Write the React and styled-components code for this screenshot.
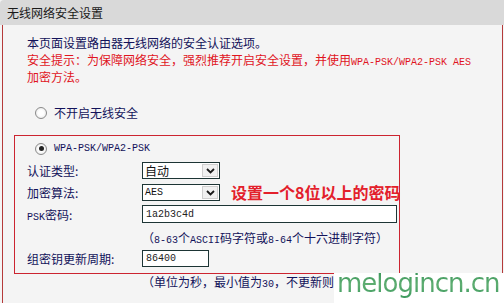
import React from "react";
import styled, { createGlobalStyle } from "styled-components";

const Global = createGlobalStyle`
  html, body { margin: 0; padding: 0; background: #f4f4f4; }
  body {
    font-family: "Noto Sans CJK SC", sans-serif;
    font-size: 12px;
    color: #12125a;
  }
`;

const Page = styled.div`
  position: relative;
  width: 504px;
  height: 303px;
  overflow: hidden;
  background: #f4f4f4;
  display: flex;
  flex-direction: column;
`;

const Header = styled.div`
  height: 25px;
  flex: none;
  background: #d9d9d9;
  border-top-left-radius: 4px;
  display: flex;
  align-items: center;
  padding-left: 7px;
  font-size: 12px;
  color: #1a1a1a;
`;

const Body = styled.div`
  flex: 1;
  margin: 0 1px 0 2px;
  border-left: 1px solid #b53a3a;
  border-right: 1px solid #b53a3a;
  padding-top: 9px;
`;

const Intro = styled.div`
  padding-left: 24px;
  line-height: 17px;
`;

const Line = styled.div`
  height: 17px;
  white-space: nowrap;
`;

const Warn = styled(Line)`
  color: #e0141e;
`;

const Asc = styled.span`
  font-family: "Liberation Mono", monospace;
  font-size: 10px;
  line-height: 10px;
`;

const RadioRow = styled.div`
  display: flex;
  align-items: center;
  height: 17px;
  gap: 7px;
  padding-left: ${(p) => p.$indent}px;
  margin-top: ${(p) => p.$mt || 0}px;
`;

const Radio = styled.span`
  width: 12px;
  height: 12px;
  box-sizing: border-box;
  border-radius: 50%;
  border: 1px solid #8a8a8a;
  background: radial-gradient(circle, #ffffff 35%, #e2e2e2 100%);
  display: flex;
  align-items: center;
  justify-content: center;
  &::after {
    content: "";
    width: 5px;
    height: 5px;
    border-radius: 50%;
    background: ${(p) => (p.$checked ? "#222" : "transparent")};
  }
`;

const Box = styled.div`
  margin: 14px 0 0 11px;
  width: 386px;
  box-sizing: border-box;
  border: 1px solid #cc2430;
  padding: 4px 0 6px 0;
`;

const Field = styled.div`
  display: flex;
  align-items: center;
  padding-left: 12px;
  margin-top: ${(p) => p.$mt}px;
  height: ${(p) => p.$h}px;
  white-space: nowrap;
`;

const Label = styled.div`
  width: 115px;
  flex: none;
  line-height: 17px;
  height: 17px;
`;

const FakeSelect = styled.div`
  width: 78px;
  height: 17px;
  flex: none;
  box-sizing: border-box;
  border: 1px solid #1d3535;
  background: #fff;
  display: flex;
  align-items: center;
  color: #111;
`;

const SelectValue = styled.span`
  flex: 1;
  padding-left: 2px;
  font-size: ${(p) => (p.$mono ? "10px" : "12px")};
  font-family: ${(p) =>
    p.$mono ? '"Liberation Mono", monospace' : '"Noto Sans CJK SC", sans-serif'};
  line-height: 15px;
`;

const Arrow = styled.span`
  width: 16px;
  height: 13px;
  margin-right: 1px;
  box-sizing: border-box;
  background: #f1f1f1;
  border: 1px solid #cfcfcf;
  display: flex;
  align-items: center;
  justify-content: center;
`;

const Input = styled.input`
  width: ${(p) => p.$w}px;
  height: ${(p) => p.$h}px;
  flex: none;
  box-sizing: border-box;
  border: 1px solid #1d3535;
  background: #fff;
  padding: 0 3px;
  margin: 0;
  font-family: "Liberation Mono", monospace;
  font-size: 10px;
  color: #222;
  outline: none;
`;

const Callout = styled.span`
  margin-left: 11px;
  font-size: 16px;
  font-weight: 700;
  color: #e3202b;
  line-height: 17px;
  white-space: nowrap;
`;

const Hint = styled.div`
  padding-left: ${(p) => p.$indent}px;
  line-height: ${(p) => p.$lh}px;
  height: ${(p) => p.$lh}px;
  margin-top: ${(p) => p.$mt || 0}px;
  white-space: nowrap;
`;

const Watermark = styled.div`
  position: absolute;
  left: 334px;
  top: 273px;
  width: 170px;
  height: 30px;
  background: #ffffff;
  overflow: hidden;
`;

const WatermarkText = styled.span`
  display: block;
  width: max-content;
  font-family: "DejaVu Sans", sans-serif;
  font-size: 26px;
  line-height: 30px;
  letter-spacing: -1px;
  margin-left: 3px;
  margin-top: -5px;
  background: linear-gradient(180deg, #2f8f53 0%, #5fae72 55%, #3d9a5e 100%);
  -webkit-background-clip: text;
  background-clip: text;
  color: transparent;
  white-space: nowrap;
`;

const Chevron = () => (
  <svg width="9" height="6" viewBox="0 0 9 6">
    <path d="M1 1 L4.5 4.5 L8 1" fill="none" stroke="#1a1a1a" strokeWidth="1.8" />
  </svg>
);

const Select = ({ value, mono }) => (
  <FakeSelect>
    <SelectValue $mono={mono}>{value}</SelectValue>
    <Arrow>
      <Chevron />
    </Arrow>
  </FakeSelect>
);

export default function App() {
  return (
    <>
      <Global />
      <Page>
        <Header>无线网络安全设置</Header>
        <Body>
          <Intro>
            <Line>本页面设置路由器无线网络的安全认证选项。</Line>
            <Warn>
              安全提示：为保障网络安全，强烈推荐开启安全设置，并使用
              <Asc>WPA-PSK/WPA2-PSK AES</Asc>
            </Warn>
            <Warn>加密方法。</Warn>
          </Intro>
          <RadioRow $indent={32} $mt={19}>
            <Radio />
            <span>不开启无线安全</span>
          </RadioRow>
          <Box>
            <RadioRow $indent={20}>
              <Radio $checked />
              <Asc>WPA-PSK/WPA2-PSK</Asc>
            </RadioRow>
            <Field $mt={5} $h={17}>
              <Label>认证类型:</Label>
              <Select value="自动" />
            </Field>
            <Field $mt={5} $h={17}>
              <Label>加密算法:</Label>
              <Select value="AES" mono />
              <Callout>设置一个8位以上的密码</Callout>
            </Field>
            <Field $mt={4} $h={18}>
              <Label>
                <Asc>PSK</Asc>密码:
              </Label>
              <Input $w={255} $h={18} defaultValue="1a2b3c4d" readOnly />
            </Field>
            <Hint $indent={127} $lh={17} $mt={6}>
              （<Asc>8-63</Asc>个<Asc>ASCII</Asc>码字符或<Asc>8-64</Asc>个十六进制字符）
            </Hint>
            <Field $mt={4} $h={17}>
              <Label>组密钥更新周期:</Label>
              <Input $w={67} $h={17} defaultValue="86400" readOnly />
            </Field>
          </Box>
          <Hint $indent={139} $lh={16}>
            （单位为秒，最小值为<Asc>30</Asc>，不更新则
          </Hint>
        </Body>
        <Watermark>
          <WatermarkText>melogincn.cn</WatermarkText>
        </Watermark>
      </Page>
    </>
  );
}
